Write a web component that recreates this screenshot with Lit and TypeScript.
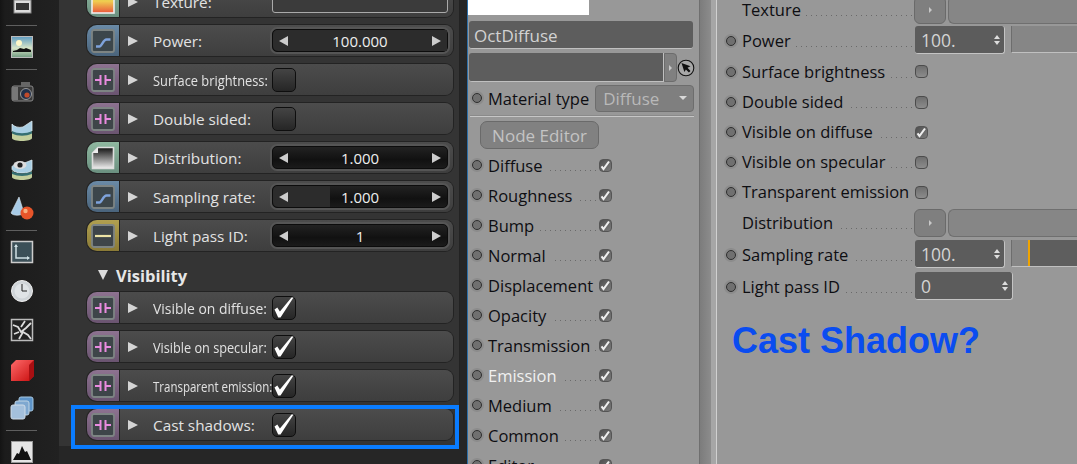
import { LitElement, html, css, svg } from "lit";
import { customElement } from "lit/decorators.js";

const curve = svg`<rect x="1" y="1" width="22" height="22" rx="2" fill="#3c464b" stroke="#7d8483" stroke-width="1.8"/><path d="M5 17.5h3.5c2.5 0 3.5-7 7-7H19.5" fill="none" stroke="#7ea3dc" stroke-width="2.4"/>`;
const pin = svg`<rect x="1" y="1" width="22" height="22" rx="2" fill="#3e4549" stroke="#7d8483" stroke-width="1.8"/><path d="M4 12h5.5M9.5 7v10M20 12h-5.5M14.5 7v10" fill="none" stroke="#e98be0" stroke-width="2"/>`;
const line = svg`<rect x="1" y="1" width="22" height="22" rx="2" fill="#3e4549" stroke="#7d8483" stroke-width="1.8"/><path d="M4 12h16" stroke="#ece3a6" stroke-width="2.2"/>`;
const dist = svg`<defs><linearGradient id="dg" x1="0" y1="0" x2="0" y2="1"><stop offset="0" stop-color="#111"/><stop offset="1" stop-color="#eee"/></linearGradient></defs><path d="M7 1.5h15.5v21h-21V7z" fill="url(#dg)" stroke="#ddd" stroke-width="1.6"/><path d="M7 1.5V7H1.5z" fill="#eee"/>`;
const tex = svg`<defs><linearGradient id="tg" x1="0" y1="0" x2="0" y2="1"><stop offset="0" stop-color="#6d8f50"/><stop offset=".45" stop-color="#f0d050"/><stop offset="1" stop-color="#e9563c"/></linearGradient></defs><rect x="1" y="1" width="22" height="22" fill="url(#tg)" stroke="#eee" stroke-width="1.6"/>`;

type Row = { c: string; icon: unknown; label: string; kind: "value" | "check" | "checked" | "tex"; value?: string; fill?: number; scale?: number };
const rowsA: Row[] = [
  { c: "green", icon: tex, label: "Texture:", kind: "tex" },
  { c: "blue", icon: curve, label: "Power:", kind: "value", value: "100.000", fill: 100 },
  { c: "purple", icon: pin, label: "Surface brightness:", kind: "check", scale: 0.84 },
  { c: "purple", icon: pin, label: "Double sided:", kind: "check" },
  { c: "green", icon: dist, label: "Distribution:", kind: "value", value: "1.000" },
  { c: "blue", icon: curve, label: "Sampling rate:", kind: "value", value: "1.000", fill: 33 },
  { c: "yellow", icon: line, label: "Light pass ID:", kind: "value", value: "1" },
];
const rowsB: Row[] = [
  { c: "purple", icon: pin, label: "Visible on diffuse:", kind: "checked", scale: 0.91 },
  { c: "purple", icon: pin, label: "Visible on specular:", kind: "checked", scale: 0.83 },
  { c: "purple", icon: pin, label: "Transparent emission:", kind: "checked", scale: 0.75 },
  { c: "purple", icon: pin, label: "Cast shadows:", kind: "checked" },
];
const mid = ["Diffuse", "Roughness", "Bump", "Normal", "Displacement", "Opacity", "Transmission", "Emission", "Medium", "Common", "Editor"];

const tools: unknown[] = [
  svg`<rect x="3" y="8" width="17" height="13" fill="#ddd" stroke="#888"/><rect x="5" y="11" width="13" height="7" fill="#333"/>`,
  "sep",
  svg`<defs><linearGradient id="sky" x1="0" y1="0" x2="0" y2="1"><stop offset="0" stop-color="#5d9ac0"/><stop offset=".55" stop-color="#d8e6c8"/><stop offset="1" stop-color="#6f9a80"/></linearGradient></defs><rect x=".5" y=".5" width="21" height="21" fill="url(#sky)" stroke="#bbb"/><circle cx="8" cy="7" r="3" fill="#fff8c8"/><path d="M2 15l4-1 3-2 4 1 2-1 5 2v2H2z" fill="#111"/>`,
  "sep",
  svg`<rect x="1" y="6" width="21" height="15" rx="2" fill="#3a3a3a" stroke="#888"/><rect x="10" y="2" width="9" height="5" fill="#666"/><rect x="1" y="7" width="6" height="13" fill="#777"/><circle cx="15" cy="14" r="5.5" fill="#22304a" stroke="#999"/><circle cx="16" cy="15" r="2.6" fill="#c24a2a"/>`,
  svg`<path d="M1 5c2 3 7 4 11 3l9-6v10c-3 3-6 4-10 4-5 0-10-1-10-4z" fill="#a9cfe4" stroke="#dbe8ee" stroke-width=".8"/><path d="M1 11c0 3 5 4 10 4s10-1 10-4v8c0 2-5 3-10 3S1 21 1 19z" fill="#c3cf9d"/><path d="M1 12c6 3 14 3 20 0v2.5c-6 3-14 3-20 0z" fill="#356f72"/>`,
  svg`<path d="M1 9c0-2 4-3 10-3l10-4v9c0 3-5 4-10 4S1 13 1 11z" fill="#a9cfe4" stroke="#dbe8ee" stroke-width=".8"/><path d="M1 12c0 3 5 4 10 4s10-1 10-4v7c0 2-5 3-10 3S1 21 1 19z" fill="#c3cf9d"/><path d="M1 13.5c6 2.5 14 2.5 20 0v2.5c-6 2.5-14 2.5-20 0z" fill="#356f72"/><ellipse cx="9" cy="7" rx="6.5" ry="4" fill="#ddd"/><circle cx="9" cy="7" r="2.6" fill="#222"/>`,
  svg`<path d="M8 0L0 16c2 3 10 3 13 0z" fill="#a8cbe6" stroke="#dfeaf0" stroke-width=".6"/><circle cx="16" cy="16" r="6.5" fill="#e8552a"/><circle cx="14.5" cy="14" r="2.2" fill="#f8b080"/>`,
  "sep",
  svg`<rect x=".5" y=".5" width="21" height="21" fill="#3c5058" stroke="#ccc" stroke-width="1.5"/><path d="M5 4v13h13" fill="none" stroke="#cfe0e4" stroke-width="1.5"/><path d="M3 6l2-3 2 3M16 15l3 2-3 2" fill="#cfe0e4"/>`,
  svg`<circle cx="11" cy="11" r="10.5" fill="#cfd4d8" stroke="#eee"/><circle cx="11" cy="11" r="7.5" fill="#dfe3e6"/><path d="M11 4v7h5" fill="none" stroke="#222" stroke-width="1"/>`,
  svg`<rect x=".5" y=".5" width="21" height="21" fill="#222" stroke="#bbb" stroke-width="1.5"/><path d="M2 6l5 2 3 5 5-4 5-5M3 15l5-2M8 20l4-7 5 3 3 4M14 2l-4 6" fill="none" stroke="#ddd" stroke-width="1.8"/>`,
  svg`<defs><linearGradient id="rc" x1="0" y1="0" x2="1" y2="1"><stop offset="0" stop-color="#ff6a6a"/><stop offset="1" stop-color="#c80d0d"/></linearGradient></defs><path d="M5 2h18v16l-5 5H0V7z" fill="url(#rc)"/><path d="M18 7l5-5v16l-5 5z" fill="#a80f12"/>`,
  svg`<rect x="8" y="0" width="14" height="14" rx="2" fill="#5e94c8" stroke="#a8c8e0"/><rect x="4" y="4" width="14" height="14" rx="2" fill="#7fa8d0" stroke="#c0d4e4"/><rect x="0" y="8" width="14" height="14" rx="2" fill="#a4c0dc" stroke="#d0dce8"/>`,
  "sep",
  svg`<rect x=".5" y=".5" width="21" height="21" fill="#e4e4e4" stroke="#999"/><path d="M2 19l4-7 2 1 3-8 3 6 2-1 4 9z" fill="#111"/>`,
];

@customElement("app-root")
export class AppRoot extends LitElement {
  static styles = css`
    :host { display: block; width: 1077px; height: 464px; overflow: hidden; background: #999; font-family: "Open Sans", sans-serif; }
    .app { display: flex; height: 464px; overflow: hidden; }
    .tools { width: 59px; flex: none; background: linear-gradient(90deg, #141414 0, #1c1c1c 5px, #212121 100%); display: flex; flex-direction: column; padding: 0 0 0 6px; box-sizing: border-box; margin-top: -16px; height: 520px; }
    .tool { width: 22px; height: 39px; flex: none; margin-left: 5px; display: flex; align-items: center; }
    .tool svg { width: 23px; height: 23px; overflow: visible; }
    .tsep { height: 1px; width: 31px; background: #5f5f5f; flex: none; margin: 2px 0 2px 0; }
    .panelwrap { width: 408px; flex: none; background: #262626; display: flex; }
    .panel { width: 401px; height: 446px; background: #343434; box-sizing: border-box; padding: 0 6px 0 28px; display: flex; flex-direction: column; gap: 8px; border-right: 1px solid #222; }
    .list { display: flex; flex-direction: column; gap: 8px; margin-top: -14px; }
    .list.b { margin-top: 0; }
    .vis { height: 33px; margin: -8px 0 -8px 11px; padding-top: 8px; box-sizing: content-box; color: #e6e6e6; font: bold 16.5px "Open Sans", sans-serif; display: flex; align-items: center; gap: 8px; }
    .tri-d { width: 0; height: 0; border-left: 5px solid transparent; border-right: 5px solid transparent; border-top: 10px solid #ddd; margin-bottom: 2px; }
    .row { height: 31px; display: flex; position: relative; flex: none; border-radius: 10px 8px 8px 10px; box-shadow: 0 0 0 1px #232323; }
    .swatch { width: 32px; flex: none; border-radius: 10px 0 0 10px; display: flex; align-items: center; justify-content: center; }
    .swatch svg { width: 24px; height: 24px; }
    .blue { background: linear-gradient(#6a8aa6, #4a647c); }
    .purple { background: linear-gradient(#8d7290, #6a5470); }
    .green { background: linear-gradient(#8fb8a0, #6b9080); }
    .yellow { background: linear-gradient(#b0a050, #8a7a36); }
    .main { flex: 1; display: flex; align-items: center; background: linear-gradient(#4c4c4c, #3e3e3e); border-radius: 0 8px 8px 0; border-left: 1px solid #222; padding-right: 5px; }
    .tri { width: 0; height: 0; border-top: 5px solid transparent; border-bottom: 5px solid transparent; border-left: 10px solid #d4d4d4; margin-left: 8px; flex: none; }
    .lab { width: 119px; margin-left: 15px; flex: none; color: #e2e2e2; font-size: 15.3px; white-space: nowrap; transform-origin: left center; }
    .field { flex: 1; height: 23px; border-radius: 5px; background: linear-gradient(#222, #111 60%, #1b1b1b); border: 1px solid #0c0c0c; box-shadow: 0 0 0 2px #555; display: flex; align-items: center; justify-content: space-between; padding: 0 6px; box-sizing: border-box; color: #eee; font-size: 15px; position: relative; }
    .fill { position: absolute; left: 0; top: 0; bottom: 0; background: #2c2c2c; border-radius: 5px 0 0 5px; }
    .num { position: relative; }
    .al { width: 0; height: 0; border-top: 5px solid transparent; border-bottom: 5px solid transparent; border-right: 9px solid #ccc; position: relative; }
    .ar { width: 0; height: 0; border-top: 5px solid transparent; border-bottom: 5px solid transparent; border-left: 9px solid #ccc; position: relative; }
    .texf { flex: 1; height: 27px; align-self: flex-start; background: #3b3b3b; border: 1px solid #aaa; border-radius: 3px; box-sizing: border-box; }
    .cb { width: 24px; height: 24px; border-radius: 5px; background: linear-gradient(#444, #262626); border: 1px solid #0e0e0e; box-sizing: border-box; flex: none; display: flex; align-items: center; justify-content: center; }
    .cb svg { width: 24px; height: 24px; flex: none; }
    .hl { position: absolute; left: -16px; right: -6px; top: -4px; bottom: -9px; border: 4px solid #0a7cff; box-sizing: border-box; pointer-events: none; }
    .divider { width: 1px; flex: none; background: #2d6fa8; }
    .mid { width: 232px; flex: none; box-sizing: border-box; background: #989898; border-right: 1px solid #6f6f6f; display: flex; flex-direction: column; padding-left: 1px; }
    .thumb { width: 121px; height: 15px; background: #fff; margin-left: -1px; flex: none; }
    .name { margin: 6px 6px 0 0; height: 28px; background: #5d5d5d; border-radius: 3px; border-bottom: 1px solid #c0c0c0; box-sizing: border-box; color: #d2d2d2; font-size: 17px; padding-left: 5px; padding-top: 2px; display: flex; align-items: center; flex: none; }
    .link { display: flex; margin: 4px 0 0 0; height: 29px; flex: none; align-items: center; }
    .linkf { width: 195px; height: 29px; background: #5d5d5d; border-bottom: 1px solid #c0c0c0; border-right: 1px solid #c0c0c0; border-radius: 3px 0 0 3px; box-sizing: border-box; }
    .linkb { width: 13px; height: 29px; background: #808080; border: 1px solid #6c6c6c; border-radius: 0 4px 4px 0; box-sizing: border-box; display: flex; align-items: center; justify-content: center; }
    .mini { width: 0; height: 0; border-top: 3px solid transparent; border-bottom: 3px solid transparent; border-left: 3px solid #c8c8c8; }
    .cursor { width: 18px; height: 18px; flex: none; }
    .mt { display: flex; align-items: center; height: 28px; margin: 2px 0 0 1px; flex: none; }
    .dot { width: 14px; height: 14px; border-radius: 50%; background: #8c8c8c; flex: none; display: flex; align-items: center; justify-content: center; }
    .dot::after { content: ""; width: 8px; height: 8px; border-radius: 50%; background: #707070; border: 1px solid #2f2f2f; }
    .t { color: #0e0e12; font-size: 16.5px; margin-left: 4px; white-space: nowrap; }
    .sel { margin-left: 6px; width: 99px; height: 27px; background: #7f7f7f; border: 1px solid #6d6d6d; border-radius: 4px; box-sizing: border-box; color: #b9b9b9; font-size: 17px; display: flex; align-items: center; padding: 0 6px 0 7px; justify-content: space-between; }
    .caret { width: 0; height: 0; border-left: 4px solid transparent; border-right: 4px solid transparent; border-top: 4px solid #d8d8d8; }
    .sep { height: 1px; background: #c6c6c6; margin: 4px 5px 0 1px; flex: none; box-shadow: 0 -1px 0 #8a8a8a; }
    .node { margin: 4px 0 0 11px; width: 119px; height: 28px; background: #818181; border: 1px solid #6a6a6a; border-radius: 7px; box-sizing: border-box; color: #c4c4c4; font-size: 17px; display: flex; align-items: center; justify-content: center; flex: none; }
    .prow { display: flex; align-items: center; height: 30px; flex: none; }
    .leader { flex: 1; min-width: 0; height: 1px; margin: 11px 0 0 1px; background: repeating-linear-gradient(270deg, #6a6a6a 0 1px, transparent 1px 5px); -webkit-mask: linear-gradient(90deg, transparent 4px, #000 4px); mask: linear-gradient(90deg, transparent 4px, #000 4px); }
    .mlist { width: 142px; margin-left: 1px; display: flex; flex-direction: column; margin-top: 1px; }
    .ck { width: 13px; height: 13px; border-radius: 4px; flex: none; box-sizing: border-box; border: 1px solid #555; margin-left: 3px; background: linear-gradient(135deg, #4e4e4e, #7c7c7c); display: flex; align-items: center; justify-content: center; overflow: hidden; }
    .ck svg { width: 11px; height: 11px; flex: none; }
    .ck.off { background: linear-gradient(#6e6e6e, #8c8c8c); border-color: #4c4c4c; }
    .em { color: #f0f0f0; }
    .gutter { width: 16px; flex: none; display: flex; background: #888; }
    .gutter .a { background: linear-gradient(90deg, #7c7c7c, #8c8c8c); flex: 2; }
    .gutter .b { background: #a6a6a6; flex: 1; }
    .right { flex: 1; min-width: 0; background: #989898; border-left: 1px solid #d0d0d0; padding-left: 7px; overflow: hidden; display: flex; flex-direction: column; }
    .rows { margin-top: -6px; display: flex; flex-direction: column; }
    .rrow { display: flex; align-items: center; flex: none; }
    .lw { display: flex; width: 188px; flex: none; align-items: center; }
    .lw .t { margin-top: -1px; }
    .nodot { width: 14px; flex: none; }
    .btn { width: 32px; height: 28px; background: #7f7f7f; border: 1px solid #6a6a6a; border-radius: 6px; box-sizing: border-box; display: flex; align-items: center; justify-content: center; flex: none; margin-left: 2px; }
    .long { flex: 1; height: 28px; background: #868686; border: 1px solid #6f6f6f; border-radius: 6px 0 0 6px; margin-left: 2px; box-sizing: border-box; border-right: 0; }
    .inp { height: 28px; width: 90px; margin: 1px 0 0 3px; background: #5c5c5c; border-radius: 3px; box-sizing: border-box; border-bottom: 1px solid #c4c4c4; border-right: 1px solid #c4c4c4; color: #d4d4d4; font-size: 17.5px; display: flex; align-items: center; padding: 0 4px 0 6px; justify-content: space-between; flex: none; align-self: flex-start; }
    .inp.w { width: 98px; }
    .spin { display: flex; flex-direction: column; gap: 2px; }
    .spin::before { content: ""; border-left: 3px solid transparent; border-right: 3px solid transparent; border-bottom: 4px solid #ddd; }
    .spin::after { content: ""; border-left: 3px solid transparent; border-right: 3px solid transparent; border-top: 4px solid #ddd; }
    .slider { flex: 1; height: 27px; margin: 1px 0 0 6px; background: #868686; border-left: 1px solid #6d6d6d; border-bottom: 1px solid #c0c0c0; box-sizing: border-box; display: flex; align-self: flex-start; }
    .slider.lv b { display: block; width: 16px; background: #868686; }
    .slider.lv u { display: block; width: 2px; background: #f0a400; }
    .slider.lv s { display: block; flex: 1; background: #5e5e5e; }
    .q { color: #0a4cf0; font: bold 36px "Liberation Sans", sans-serif; margin: 18px 0 0 8px; white-space: nowrap; line-height: 40px; }
  `;

  private control(r: Row) {
    if (r.kind === "tex") return html`<div class="texf"></div>`;
    if (r.kind === "check") return html`<div class="cb"></div>`;
    if (r.kind === "checked")
      return html`<div class="cb"><svg viewBox="0 0 24 24"><path d="M2.5 13.5l2.8-2 2.6 4L19.5 1.5H21.5L8.5 21.5H6.2z" fill="#fff"/></svg></div>`;
    return html`<div class="field">
      ${r.fill ? html`<div class="fill" style="width:${r.fill}%"></div>` : ""}
      <span class="al"></span><span class="num">${r.value}</span><span class="ar"></span>
    </div>`;
  }

  private row(r: Row, hl = false) {
    return html`<div class="row">
      <div class="swatch ${r.c}"><svg viewBox="0 0 24 24">${r.icon}</svg></div>
      <div class="main"><span class="tri"></span><span class="lab" style=${r.scale ? `transform:scaleX(${r.scale})` : ""}>${r.label}</span>${this.control(r)}</div>
      ${hl ? html`<div class="hl"></div>` : ""}
    </div>`;
  }

  private rrow(label: string, h: number, ctrl: unknown, dot = true) {
    return html`<div class="rrow" style="height:${h}px">
      <div class="lw">${dot ? html`<span class="dot"></span>` : html`<span class="nodot"></span>`}<span class="t">${label}</span><span class="leader"></span></div>
      ${ctrl}
    </div>`;
  }

  render() {
    const check = html`<span class="ck"><svg viewBox="0 0 11 11"><path d="M1.5 6.3l2 2.7 5.5-7.5" fill="none" stroke="#eee" stroke-width="2.1"/></svg></span>`;
    const off = html`<span class="ck off"></span>`;
    return html`<div class="app">
      <div class="tools">
        ${tools.map((t) => (t === "sep" ? html`<div class="tsep"></div>` : html`<div class="tool"><svg viewBox="0 0 23 23">${t}</svg></div>`))}
      </div>
      <div class="panelwrap"><div class="panel">
        <div class="list">${rowsA.map((r) => this.row(r))}</div>
        <div class="vis"><span class="tri-d"></span>Visibility</div>
        <div class="list b">${rowsB.map((r, i) => this.row(r, i === 3))}</div>
      </div></div>
      <div class="divider"></div>
      <div class="mid">
        <div class="thumb"></div>
        <div class="name">OctDiffuse</div>
        <div class="link">
          <div class="linkf"></div><div class="linkb"><span class="mini"></span></div>
          <svg class="cursor" viewBox="0 0 18 18"><circle cx="9" cy="9" r="7.8" fill="#a8a8a8" stroke="#111" stroke-width="1.1"/><path d="M4.5 4l9 3.2-3 1.6 3 3.2-1.6 1.6-3-3.2L7.4 13z" fill="#111"/></svg>
        </div>
        <div class="mt"><span class="dot"></span><span class="t">Material type</span><span class="sel">Diffuse<span class="caret"></span></span></div>
        <div class="sep"></div>
        <div class="node">Node Editor</div>
        <div class="mlist">
          ${mid.map((m) => html`<div class="prow"><span class="dot"></span><span class="t ${m === "Emission" ? "em" : ""}">${m}</span><span class="leader"></span>${check}</div>`)}
        </div>
      </div>
      <div class="gutter"><i class="a"></i><i class="b"></i></div>
      <div class="right">
        <div class="rows">
          ${this.rrow("Texture", 31, html`<div class="btn"><span class="mini"></span></div><div class="long"></div>`, false)}
          ${this.rrow("Power", 31, html`<div class="inp">100.<span class="spin"></span></div><div class="slider"></div>`)}
          ${this.rrow("Surface brightness", 31, off)}
          ${this.rrow("Double sided", 30, off)}
          ${this.rrow("Visible on diffuse", 30, check)}
          ${this.rrow("Visible on specular", 30, off)}
          ${this.rrow("Transparent emission", 30, off)}
          ${this.rrow("Distribution", 32, html`<div class="btn"><span class="mini"></span></div><div class="long"></div>`, false)}
          ${this.rrow("Sampling rate", 32, html`<div class="inp">100.<span class="spin"></span></div><div class="slider lv"><b></b><u></u><s></s></div>`)}
          ${this.rrow("Light pass ID", 32, html`<div class="inp w">0<span class="spin"></span></div>`)}
        </div>
        <div class="q">Cast Shadow?</div>
      </div>
    </div>`;
  }
}
